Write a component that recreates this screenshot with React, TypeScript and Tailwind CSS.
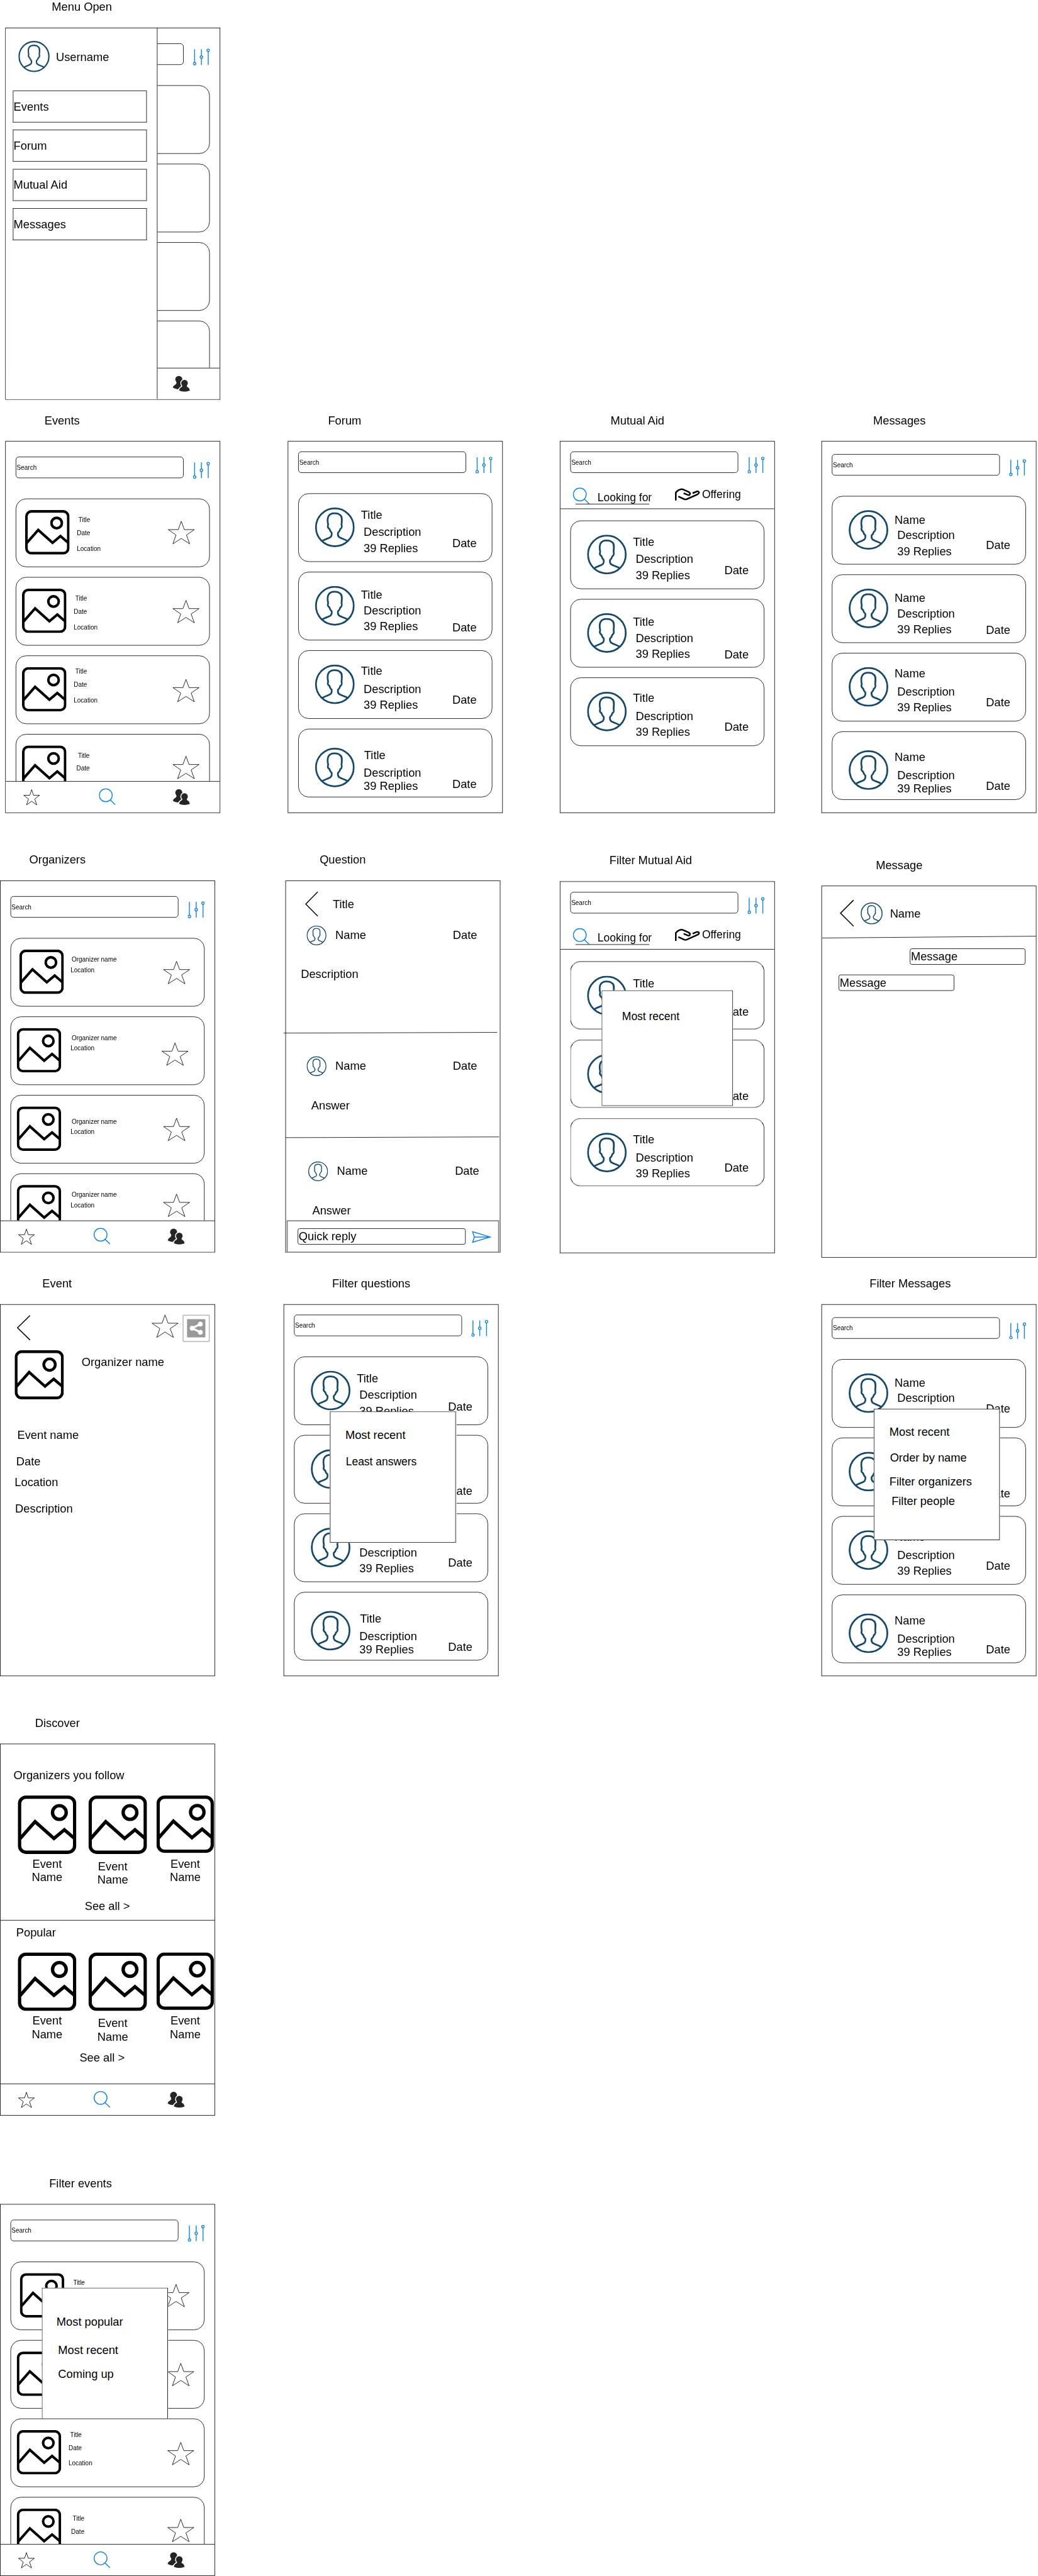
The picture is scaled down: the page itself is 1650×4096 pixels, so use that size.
import type { ReactNode } from "react";

/* ---------- icons ---------- */

function Avatar({ className }: { className: string }) {
  return (
    <svg viewBox="0 0 76 76" className={`block shrink-0 ${className}`} fill="none" stroke="#15496b" strokeWidth="3.3">
      <circle cx="38" cy="38" r="36.1" />
      <path
        strokeLinejoin="round"
        d="M14 64C20 60 28 59 30.6 55.8C32.4 53.5 32.3 50.5 32 48.3C29.2 46.3 28.6 44.5 27.6 41C25 39.5 23.8 36.5 25.2 33C22.5 20 25 11 37.5 11C42 11 45.5 11.8 47 14C52 15.5 52 22 50.8 33C52 36.5 50.8 40 48.4 41.3C47.4 45 46.6 46.6 44 48.3C43.7 50.5 43.5 53.5 45.4 55.8C48 59 56 60 62.3 64"
      />
    </svg>
  );
}

function Picture({ className }: { className: string }) {
  return (
    <svg viewBox="0 0 94 94" className={`block shrink-0 ${className}`} fill="none" stroke="#000" strokeWidth="5.4">
      <rect x="2.8" y="2.8" width="88.4" height="88.4" rx="10.5" />
      <circle cx="66.7" cy="27.4" r="11" />
      <path d="M3.5 69.5L27.7 42L58 69L74.7 55L91 69" />
    </svg>
  );
}

function Star({ className }: { className: string }) {
  return (
    <svg
      viewBox="0 0 51 44.4"
      preserveAspectRatio="none"
      className={`block shrink-0 overflow-visible ${className}`}
      fill="#fff"
      stroke="#000"
      strokeWidth="1"
    >
      <path
        vectorEffect="non-scaling-stroke"
        d="M25.5 .5L31.3 16.5H50.5L35.3 26.9L41.5 43.9L25.5 33.5L9.5 43.9L15.5 26.9L.5 16.5H19.7Z"
      />
    </svg>
  );
}

function Sliders({ className }: { className: string }) {
  return (
    <svg viewBox="0 0 32 32" className={`block h-[32px] w-[32px] shrink-0 ${className}`} fill="none" stroke="#0a84ee" strokeWidth="1.7">
      <path d="M3 1V26.3M16 1V13.5M16 18.7V31M29 5.7V31" />
      <circle cx="3" cy="28.8" r="2.4" />
      <circle cx="16" cy="16" r="2.4" />
      <circle cx="29" cy="3.2" r="2.4" />
    </svg>
  );
}

function Magnifier({ className }: { className: string }) {
  return (
    <svg viewBox="0 0 32 32" className={`block h-[32px] w-[32px] shrink-0 ${className}`} fill="none" stroke="#0a84ee" strokeWidth="1.7">
      <circle cx="13.2" cy="13.2" r="12.3" />
      <path d="M21.8 22L31.3 31.3" />
    </svg>
  );
}

function People({ className }: { className: string }) {
  return (
    <svg viewBox="0 0 33 31.5" className={`block h-[31.5px] w-[33px] shrink-0 ${className}`} fill="#252525">
      <circle cx="11.8" cy="7.2" r="6.7" />
      <path d="M7 11Q8.2 15 5.4 17Q1.2 19 .4 22.8Q4.5 25.5 10.2 26L18 18V8Z" />
      <g stroke="#fff" strokeWidth="3.4">
        <circle cx="22.7" cy="14.4" r="6.3" />
        <path d="M17.6 17.5Q19.5 20.5 17 22Q13 23.5 12.4 28.6Q22.5 32.8 32.8 28.6Q32 23.5 28.4 22Q26 20.5 27.8 17.5Z" />
      </g>
      <circle cx="22.7" cy="14.4" r="6.3" />
      <path d="M17.6 17.5Q19.5 20.5 17 22Q13 23.5 12.4 28.6Q22.5 32.8 32.8 28.6Q32 23.5 28.4 22Q26 20.5 27.8 17.5Z" />
    </svg>
  );
}

function Hand({ className }: { className: string }) {
  return (
    <svg viewBox="0 0 48 24" className={`block h-[24px] w-[48px] shrink-0 ${className}`} fill="none" stroke="#000" strokeWidth="3">
      <path d="M1.7 23.6V8.5Q6 3 12 2.2Q14 1.9 16 2.8L26.6 7.6Q29.8 9.6 28.6 12Q27.4 14.2 24.5 13L16.8 9.8" />
      <path d="M6.5 16L17.8 21.2Q20 22 22.5 21.2L43.2 12Q46.8 10 46 7.8Q44.5 5.6 41.8 6.5L33.8 9.8" />
    </svg>
  );
}

function Chevron({ className }: { className: string }) {
  return (
    <svg viewBox="0 0 26 48" preserveAspectRatio="none" className={`block shrink-0 ${className}`} fill="none" stroke="#000" strokeWidth="1.8" strokeLinecap="round">
      <path d="M25 1L1.5 24L25 47" />
    </svg>
  );
}

function Share({ className }: { className: string }) {
  return (
    <svg viewBox="0 0 52 52" className={`block h-[52px] w-[52px] shrink-0 ${className}`}>
      <rect x=".8" y=".8" width="50.4" height="50.4" rx="2" fill="#fff" stroke="#999" strokeWidth="1.5" />
      <rect x="8.5" y="8.5" width="35" height="35" rx="1" fill="#999" />
      <g fill="#fff" stroke="#fff">
        <path d="M34 18L18.5 25.8L34 33.7" fill="none" strokeWidth="4" />
        <circle cx="18.3" cy="25.8" r="4.4" strokeWidth=".6" />
        <circle cx="34" cy="18" r="4.4" strokeWidth=".6" />
        <circle cx="34" cy="33.7" r="4.4" strokeWidth=".6" />
      </g>
    </svg>
  );
}

function Plane({ className }: { className: string }) {
  return (
    <svg viewBox="0 0 37 23" className={`block h-[23px] w-[37px] shrink-0 ${className}`} fill="none" stroke="#0a84ee" strokeWidth="1.8">
      <path d="M1.3 1.4L35 11.5L1.3 21.6L4.6 11.5ZM4.6 11.5H35" />
    </svg>
  );
}

/* ---------- building blocks ---------- */

function Artboard({ title, className, titleClass, children }: { title: string; className: string; titleClass: string; children: ReactNode }) {
  return (
    <section className={`flex shrink-0 flex-col items-start ${className}`}>
      <h2 className={`h-[53px] shrink-0 text-[22px] leading-[28px] whitespace-nowrap ${titleClass}`}>{title}</h2>
      {children}
    </section>
  );
}

const FRAME = "relative flex h-[711px] w-[411px] shrink-0 flex-col overflow-hidden bg-white border border-black";
const SOFT_FRAME = "relative flex h-[712px] w-[411px] shrink-0 flex-col overflow-hidden bg-white border-x border-y-2 border-x-black border-y-[#808080]";
const CARD = "flex h-[131px] w-[371px] shrink-0 items-start rounded-[20px] border border-black bg-white";
const SOFT_CARD = "flex h-[131px] w-[371px] shrink-0 items-start rounded-[20px] border-x border-y-2 border-x-black border-y-[#808080] bg-white";

function SearchHeader({ className, label = "Search" }: { className: string; label?: string }) {
  return (
    <header className={`flex shrink-0 items-start pl-[19px] ${className}`}>
      <div className="flex h-[41px] w-[321px] items-center rounded-[6px] border border-black pl-px text-[12px] leading-[14px]">{label}</div>
      <Sliders className="-mb-px ml-[18px] mt-[10px]" />
    </header>
  );
}

function BottomNav() {
  return (
    <nav className="flex h-[60px] shrink-0 items-start border-t border-black bg-white">
      <Star className="ml-[34px] mt-[15px] h-[30px] w-[31px]" />
      <Magnifier className="ml-[113px] mt-[13px]" />
      <People className="ml-[109px] mt-[14px]" />
    </nav>
  );
}

function Popover({ className, children }: { className: string; children: ReactNode }) {
  return <div className={`absolute flex flex-col items-start bg-white text-[22px] leading-[24px] whitespace-nowrap ${className}`}>{children}</div>;
}

/* ---------- event and organizer cards ---------- */

type MediaCard = { picture: string; text: string; star: string };

const EVENT_CARDS: MediaCard[] = [
  { picture: "ml-[17px]", text: "ml-[14px] mt-[33px]", star: "mr-[28px] mt-[42px]" },
  { picture: "ml-[11px]", text: "ml-[14px] mt-[33px]", star: "mr-[19px] mt-[43px]" },
  { picture: "ml-[11px]", text: "ml-[14px] mt-[23px]", star: "mr-[19px] mt-[44px]" },
  { picture: "ml-[11px]", text: "ml-[19px] mt-[33px]", star: "mr-[19px] mt-[41px]" },
];

const ORGANIZER_CARDS: MediaCard[] = [
  { picture: "ml-[16px]", text: "ml-[13px] mt-[33px]", star: "mr-[27px] mt-[43px]" },
  { picture: "ml-[11px]", text: "ml-[18px] mt-[33px]", star: "mr-[30px] mt-[49px]" },
  { picture: "ml-[11px]", text: "ml-[18px] mt-[43px]", star: "mr-[27px] mt-[43px]" },
  { picture: "ml-[11px]", text: "ml-[18px] mt-[33px]", star: "mr-[27px] mt-[38px]" },
];

function EventItem({ card }: { card: MediaCard }) {
  return (
    <article className={CARD}>
      <Picture className={`mt-[21px] h-[85px] w-[85px] ${card.picture}`} />
      <div className={`text-[12px] leading-[14px] ${card.text}`}>
        <p className="pl-[3px]">Title</p>
        <p className="mt-[11px]">Date</p>
        <p className="mt-[16px]">Location</p>
      </div>
      <Star className={`ml-auto h-[44px] w-[51px] ${card.star}`} />
    </article>
  );
}

function OrganizerItem({ card }: { card: MediaCard }) {
  return (
    <article className={CARD}>
      <Picture className={`mt-[21px] h-[85px] w-[85px] ${card.picture}`} />
      <div className={`text-[12px] leading-[14px] ${card.text}`}>
        <p className="pl-[2px]">Organizer name</p>
        <p className="mt-[6px]">Location</p>
      </div>
      <Star className={`ml-auto h-[44px] w-[51px] ${card.star}`} />
    </article>
  );
}

/* ---------- conversation cards ---------- */

type Thread = { avatar: string; heading: string; description: string; replies: string; date: string };

const TOPICS: Thread[] = [
  { avatar: "mt-[26px]", heading: "mt-[29px]", description: "mt-[8px]", replies: "mt-[7px]", date: "mt-[83px]" },
  { avatar: "mt-[26px]", heading: "mt-[31px]", description: "mt-[7px]", replies: "mt-[6px]", date: "mt-[94px]" },
  { avatar: "mt-[26px]", heading: "mt-[27px]", description: "mt-[11px]", replies: "mt-[6px]", date: "mt-[82px]" },
  { avatar: "mt-[35px]", heading: "mt-[38px] pl-[6px]", description: "mt-[10px]", replies: "mt-[1px]", date: "mt-[93px]" },
];

const CHATS: Thread[] = [
  { avatar: "mt-[26px]", heading: "mt-[33px]", description: "mt-[5px]", replies: "mt-[7px]", date: "mt-[82px]" },
  { avatar: "mt-[26px]", heading: "mt-[32px]", description: "mt-[6px]", replies: "mt-[6px]", date: "mt-[94px]" },
  { avatar: "mt-[26px]", heading: "mt-[27px]", description: "mt-[11px]", replies: "mt-[6px]", date: "mt-[82px]" },
  { avatar: "mt-[35px]", heading: "mt-[37px]", description: "mt-[11px]", replies: "mt-[1px]", date: "mt-[92px]" },
];

function ThreadList({ threads, heading, className, soft }: { threads: Thread[]; heading: string; className: string; soft?: boolean }) {
  return (
    <main className={`flex flex-col gap-[19px] pl-[19px] ${className}`}>
      {threads.map((t, i) => (
        <article key={i} className={soft ? SOFT_CARD : CARD}>
          <Avatar className={`ml-[31px] h-[76px] w-[76px] ${t.avatar}`} />
          <div className="ml-[12px] text-[22px] leading-[24px] whitespace-nowrap">
            <p className={t.heading}>{heading}</p>
            <p className={`pl-[5px] ${t.description}`}>Description</p>
            <p className={`pl-[5px] ${t.replies}`}>39 Replies</p>
          </div>
          <p className={`mr-[29px] ml-auto text-[22px] leading-[24px] ${t.date}`}>Date</p>
        </article>
      ))}
    </main>
  );
}

function AidTabs() {
  return (
    <div className="flex h-[69px] shrink-0 items-start border-b border-black text-[21px] leading-[24px] whitespace-nowrap">
      <div className="relative ml-[24px] flex h-[60px] items-start">
        <Magnifier className="mt-[28px]" />
        <span className="ml-[15px] mt-[35px]">Looking for</span>
        <span className="absolute bottom-0 left-[5px] h-px w-[141px] bg-black" />
      </div>
      <Hand className="ml-[44px] mt-[29px]" />
      <span className="ml-[4px] mt-[29px]">Offering</span>
    </div>
  );
}

/* ---------- screens ---------- */

function MenuScreen() {
  return (
    <div className={FRAME}>
      <div className="min-h-0 flex-1 overflow-hidden">
        <SearchHeader className="h-[70px] pt-[29px]" label="" />
        <div className="mt-[39px] flex flex-col gap-[19px] pl-[19px]">
          {EVENT_CARDS.map((_, i) => (
            <div key={i} className={CARD} />
          ))}
        </div>
      </div>
      <BottomNav />
      <aside className="absolute inset-y-0 left-0 w-[290px] border-r border-black bg-white text-[22px] leading-[24px]">
        <div className="flex items-center pl-[24px] pt-[24px]">
          <Avatar className="h-[60px] w-[60px]" />
          <span className="ml-[12px] mt-[3px]">Username</span>
        </div>
        <div className="mt-[35px] ml-[13px] flex flex-col gap-[14px]">
          {["Events", "Forum", "Mutual Aid", "Messages"].map((item) => (
            <div key={item} className="flex h-[61px] w-[257px] items-center border-x-2 border-y border-x-[#808080] border-y-black">
              {item}
            </div>
          ))}
        </div>
      </aside>
    </div>
  );
}

function EventsScreen({ children }: { children?: ReactNode }) {
  return (
    <div className={FRAME}>
      <div className="min-h-0 flex-1 overflow-hidden">
        <SearchHeader className="h-[70px] pt-[29px]" />
        <main className="mt-[39px] flex flex-col gap-[19px] pl-[19px]">
          {EVENT_CARDS.map((card, i) => (
            <EventItem key={i} card={card} />
          ))}
        </main>
      </div>
      <BottomNav />
      {children}
    </div>
  );
}

function OrganizersScreen() {
  return (
    <div className={FRAME}>
      <div className="min-h-0 flex-1 overflow-hidden">
        <SearchHeader className="h-[70px] pt-[29px]" />
        <main className="mt-[39px] flex flex-col gap-[19px] pl-[19px]">
          {ORGANIZER_CARDS.map((card, i) => (
            <OrganizerItem key={i} card={card} />
          ))}
        </main>
      </div>
      <BottomNav />
    </div>
  );
}

function ForumScreen({ children }: { children?: ReactNode }) {
  return (
    <div className={FRAME}>
      <SearchHeader className="h-[60px] pt-[19px]" />
      <ThreadList threads={TOPICS} heading="Title" className="mt-[39px]" />
      {children}
    </div>
  );
}

function AidScreen({ soft, children }: { soft?: boolean; children?: ReactNode }) {
  return (
    <div className={soft ? SOFT_FRAME : FRAME}>
      <SearchHeader className="h-[60px] pt-[19px]" />
      <AidTabs />
      <ThreadList threads={TOPICS.slice(0, 3)} heading="Title" className="mt-[22px]" soft={soft} />
      {children}
    </div>
  );
}

function MessagesScreen({ children }: { children?: ReactNode }) {
  return (
    <div className={FRAME}>
      <SearchHeader className="h-[65px] pt-[24px]" />
      <ThreadList threads={CHATS} heading="Name" className="mt-[39px]" />
      {children}
    </div>
  );
}

function PostHeader({ className }: { className: string }) {
  return (
    <div className={`flex h-[38px] shrink-0 items-start ${className}`}>
      <Avatar className="h-[38px] w-[38px]" />
      <span className="ml-[17px] mt-[7px]">Name</span>
      <span className="ml-auto mt-[7px]">Date</span>
    </div>
  );
}

function SlantedRule({ className, d }: { className: string; d: string }) {
  return (
    <svg viewBox="0 0 412 4" className={`block h-[4px] w-[412px] shrink-0 ${className}`} fill="none" stroke="#000">
      <path d={d} />
    </svg>
  );
}

function QuestionScreen() {
  return (
    <div className="flex h-[711px] w-[412px] shrink-0 flex-col border-x-2 border-y border-x-[#808080] border-y-black bg-white text-[22px] leading-[24px]">
      <header className="flex h-[85px] shrink-0 items-start pl-[36px]">
        <Chevron className="mt-[20px] h-[48px] w-[25px]" />
        <span className="ml-[28px] mt-[33px]">Title</span>
      </header>
      <PostHeader className="mr-[43px] ml-[39px]" />
      <p className="mt-[43px] ml-[28px]">Description</p>
      <SlantedRule className="mt-[98px] -ml-[5px]" d="M0 2.8L408 1.4" />
      <PostHeader className="mt-[43px] mr-[43px] ml-[39px]" />
      <p className="mt-[44px] ml-[48px]">Answer</p>
      <SlantedRule className="mt-[47px] -ml-[1px]" d="M0 2.6L408 1.2" />
      <PostHeader className="mt-[44px] mr-[39px] ml-[42px]" />
      <p className="mt-[44px] ml-[50px]">Answer</p>
      <footer className="mt-auto ml-px flex h-[60px] w-[406px] shrink-0 items-start border-x-2 border-t border-x-[#808080] border-t-black">
        <div className="mt-[14px] ml-[19px] flex h-[31px] w-[321px] items-center rounded-[4px] border border-black pl-px">Quick reply</div>
        <Plane className="mt-[19px] ml-[12px]" />
      </footer>
    </div>
  );
}

function MessageScreen() {
  const bubble = "flex h-[31px] w-[221px] items-center rounded-[4px] border border-black pl-px";
  return (
    <div className={`${FRAME} text-[22px] leading-[24px]`}>
      <header className="flex h-[94px] shrink-0 items-start pl-[34px]">
        <Chevron className="mt-[26px] h-[51px] w-[27px]" />
        <Avatar className="mt-[31px] ml-[13px] h-[42px] w-[42px]" />
        <span className="mt-[41px] ml-[14px]">Name</span>
      </header>
      <svg viewBox="0 0 410 6" className="block h-[6px] w-[410px] shrink-0" fill="none" stroke="#000">
        <path d="M0 5L410 1.5" />
      </svg>
      <div className={`mt-[19px] ml-[168px] ${bubble}`}>Message</div>
      <div className={`mt-[19px] ml-[32px] ${bubble}`}>Message</div>
    </div>
  );
}

function EventScreen() {
  return (
    <div className={`${FRAME} text-[22px] leading-[24px]`}>
      <header className="flex h-[87px] shrink-0 items-start pl-[31px]">
        <Chevron className="mt-[20px] h-[48px] w-[26px]" />
        <Star className="mt-[19px] ml-auto h-[44px] w-[51px]" />
        <Share className="mt-[19px] mr-[9px] ml-[8px]" />
      </header>
      <div className="flex h-[94px] shrink-0 items-start pl-[27px]">
        <Picture className="h-[94px] w-[94px]" />
        <span className="mt-[11px] ml-[34px]">Organizer name</span>
      </div>
      <p className="mt-[57px] ml-[32px]">Event name</p>
      <p className="mt-[26px] ml-[30px]">Date</p>
      <p className="mt-[16px] ml-[27px]">Location</p>
      <p className="mt-[26px] ml-[28px]">Description</p>
    </div>
  );
}

function EventTiles({ className }: { className: string }) {
  return (
    <div className={`flex shrink-0 items-start pl-[33px] text-center leading-[26px] ${className}`}>
      <div className="w-[112px]">
        <Picture className="h-[112px] w-[112px]" />
        <p className="mt-[6px]">Event<br />Name</p>
      </div>
      <div className="ml-[23px] w-[112px]">
        <Picture className="h-[112px] w-[112px]" />
        <p className="mt-[11px] mr-[19px]">Event<br />Name</p>
      </div>
      <div className="ml-[18px] w-[110px]">
        <Picture className="h-[110px] w-[110px]" />
        <p className="mt-[8px]">Event<br />Name</p>
      </div>
    </div>
  );
}

function DiscoverScreen() {
  return (
    <div className={`${FRAME} text-[22px] leading-[24px]`}>
      <section className="flex h-[337px] shrink-0 flex-col border-b border-black">
        <h3 className="mt-[48px] ml-[25px]">Organizers you follow</h3>
        <EventTiles className="mt-[26px] h-[200px]" />
        <p className="ml-[161px]">See all &gt;</p>
      </section>
      <section className="flex flex-1 flex-col">
        <h3 className="mt-[11px] ml-[30px]">Popular</h3>
        <EventTiles className="mt-[26px] h-[190px]" />
        <p className="ml-[151px]">See all &gt;</p>
      </section>
      <BottomNav />
    </div>
  );
}

/* ---------- board ---------- */

export default function App() {
  return (
    <div className="h-[4096px] w-[1650px] overflow-hidden bg-white font-['Liberation_Sans',Arial,sans-serif] text-black">
      <div className="flex h-[4924px] w-[1984px] origin-top-left flex-col [transform:scale(0.83165,0.83184)]">
        <div className="flex h-[790px] shrink-0 items-start">
          <Artboard title="Menu Open" className="ml-[10px]" titleClass="pl-[89px]">
            <MenuScreen />
          </Artboard>
        </div>

        <div className="flex h-[840px] shrink-0 items-start">
          <Artboard title="Events" className="ml-[10px]" titleClass="pl-[75px]">
            <EventsScreen />
          </Artboard>
          <Artboard title="Forum" className="ml-[129px]" titleClass="pl-[77px]">
            <ForumScreen />
          </Artboard>
          <Artboard title="Mutual Aid" className="ml-[109px]" titleClass="pl-[97px]">
            <AidScreen />
          </Artboard>
          <Artboard title="Messages" className="ml-[89px]" titleClass="pl-[99px]">
            <MessagesScreen />
          </Artboard>
        </div>

        <div className="flex h-[810px] shrink-0 items-start">
          <Artboard title="Organizers" className="" titleClass="pl-[56px]">
            <OrganizersScreen />
          </Artboard>
          <Artboard title="Question" className="ml-[134px]" titleClass="pl-[66px]">
            <QuestionScreen />
          </Artboard>
          <Artboard title="Filter Mutual Aid" className="mt-px ml-[113px]" titleClass="pl-[95px]">
            <AidScreen soft>
              <Popover className="top-[207px] left-[79px] h-[221px] w-[251px] border border-black pt-[37px] pl-[38px]">
                <p className="text-[21px]">Most recent</p>
              </Popover>
            </AidScreen>
          </Artboard>
          <Artboard title="Message" className="mt-[10px] ml-[89px]" titleClass="pl-[104px]">
            <MessageScreen />
          </Artboard>
        </div>

        <div className="flex h-[840px] shrink-0 items-start">
          <Artboard title="Event" className="" titleClass="pl-[81px]">
            <EventScreen />
          </Artboard>
          <Artboard title="Filter questions" className="ml-[131px]" titleClass="pl-[93px]">
            <ForumScreen>
              <Popover className="top-[204px] left-[87px] h-[251px] w-[242px] border-x-2 border-y border-x-[#808080] border-y-black pt-[32px] pl-[28px]">
                <p>Most recent</p>
                <p className="mt-[27px] pl-px text-[21px]">Least answers</p>
              </Popover>
            </ForumScreen>
          </Artboard>
          <Artboard title="Filter Messages" className="ml-[617px]" titleClass="pl-[92px]">
            <MessagesScreen>
              <Popover className="top-[199px] left-[99px] h-[251px] w-[241px] border border-black pt-[32px] pl-[29px]">
                <p>Most recent</p>
                <p className="mt-[25px] pl-px">Order by name</p>
                <p className="mt-[22px]">Filter organizers</p>
                <p className="mt-[13px] pl-[4px]">Filter people</p>
              </Popover>
            </MessagesScreen>
          </Artboard>
        </div>

        <div className="flex h-[880px] shrink-0 items-start">
          <Artboard title="Discover" className="" titleClass="pl-[67px]">
            <DiscoverScreen />
          </Artboard>
        </div>

        <div className="flex h-[764px] shrink-0 items-start">
          <Artboard title="Filter events" className="" titleClass="pl-[94px]">
            <EventsScreen>
              <Popover className="top-[159px] left-[79px] h-[251px] w-[241px] border border-black pt-[52px] pl-[27px]">
                <p>Most popular</p>
                <p className="mt-[31px] pl-[3px]">Most recent</p>
                <p className="mt-[21px] pl-[3px]">Coming up</p>
              </Popover>
            </EventsScreen>
          </Artboard>
        </div>
      </div>
    </div>
  );
}
